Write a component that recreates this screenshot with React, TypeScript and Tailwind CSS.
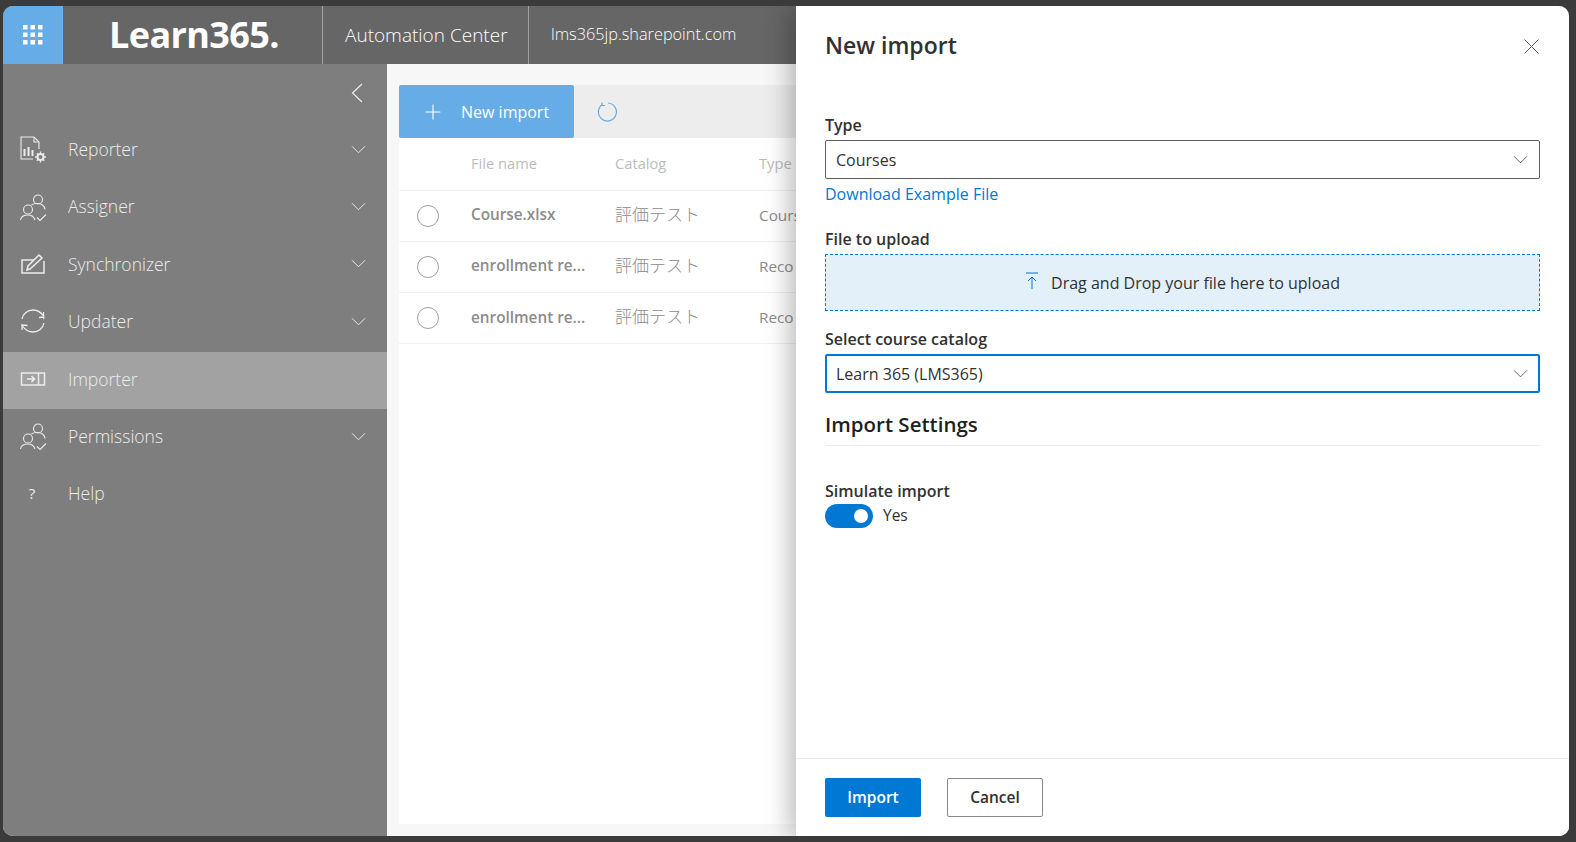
import { ReactNode } from "react";
import { Plus } from "lucide-react";

const font = "font-['Open_Sans','Noto_Sans_CJK_JP',sans-serif]";

const Chevron = ({ className }: { className: string }) => (
  <svg viewBox="0 0 16 9" fill="none" stroke="currentColor" strokeWidth="1" className={className}>
    <path d="M1 1l7 7 7-7" />
  </svg>
);

const PeopleIcon = () => (
  <svg viewBox="0 0 28 28" fill="none" stroke="currentColor" strokeWidth="1.1" className="h-7 w-7">
    <circle cx="19" cy="6.500" r="4.500" />
    <circle cx="9" cy="16.500" r="4.500" />
    <path d="M1.500 27c.5-3 3.500-5 7.500-5s6 2 7 5" />
    <path d="M12.500 12c1-1 3.500-1.500 6.500-1.500s6.500 2 7 6" />
    <path d="M18 24.500l3 3 6-6" />
  </svg>
);

const navItems: { label: string; icon: ReactNode; chevron?: boolean; active?: boolean }[] = [
  {
    label: "Reporter",
    chevron: true,
    icon: (
      <svg viewBox="0 0 28 28" fill="none" stroke="currentColor" strokeWidth="1.1" className="h-7 w-7">
        <path d="M14 24H2V2h13l5 5v7" />
        <path d="M15 2v5h5" />
        <path d="M5.500 21v-7M9.500 21v-9M13.500 21v-6" strokeWidth="2" />
        <circle cx="21.500" cy="22" r="3" strokeWidth="2" />
        <path d="M21.500 16.500v2M21.500 25.500v2M16 22h2M25 22h2M17.800 18.300l1.400 1.400M23.800 24.300l1.400 1.400M17.800 25.700l1.400-1.400M23.800 19.700l1.400-1.400" strokeWidth="1.300" />
      </svg>
    ),
  },
  { label: "Assigner", chevron: true, icon: <PeopleIcon /> },
  {
    label: "Synchronizer",
    chevron: true,
    icon: (
      <svg viewBox="0 0 28 28" fill="none" stroke="currentColor" strokeWidth="1.500" className="h-7 w-7">
        <path d="M15 10H3v13h22V11" />
        <path d="M8 20l1-4L20 5l3 3-12 11z" />
      </svg>
    ),
  },
  {
    label: "Updater",
    chevron: true,
    icon: (
      <svg viewBox="0 0 28 28" fill="none" stroke="currentColor" strokeWidth="1.300" className="h-7 w-7">
        <path d="M3 12C4 6.500 8.500 3 14 3c4.500 0 8 2.300 10.500 6" />
        <path d="M25 12c-.5-1-.5-3-.5-7M25 10l-5 .5" />
        <path d="M25 16c-1 5.500-5.500 9-11 9-4.500 0-8-2.300-10.500-6" />
        <path d="M3 17v6M3 18l5.500 .5" />
      </svg>
    ),
  },
  {
    label: "Importer",
    active: true,
    icon: (
      <svg viewBox="0 0 28 28" fill="none" stroke="currentColor" strokeWidth="1.500" className="h-7 w-7">
        <path d="M2.500 8h23v12h-23zM19.500 8v12" />
        <path d="M8 14h7M12.500 11l3 3-3 3" strokeWidth="1.700" />
      </svg>
    ),
  },
  { label: "Permissions", chevron: true, icon: <PeopleIcon /> },
  {
    label: "Help",
    icon: <span className="text-[15px] w-[26px] text-center">?</span>,
  },
];

const rows = [
  { name: "Course.xlsx", type: "Cours" },
  { name: "enrollment re...", type: "Reco" },
  { name: "enrollment re...", type: "Reco" },
];

const Sidebar = () => (
  <aside className="w-[384px] shrink-0 bg-[#7e7e7e] text-[#ececec]">
    <div className="h-[58px] flex items-center justify-end pr-[24px] pb-[1px]">
      <svg viewBox="0 0 12 20" fill="none" stroke="currentColor" strokeWidth="1.200" className="h-[20px] w-[12px]">
        <path d="M11 1L1.500 10l9.500 9" />
      </svg>
    </div>
    {navItems.map((item) => (
      <div
        key={item.label}
        className={`h-[57.4px] flex items-center pl-[16px] pr-[21px] pb-[3px] ${item.active ? "bg-[#a2a2a2]" : ""}`}
      >
        <span className="w-[49px] shrink-0 flex items-center">{item.icon}</span>
        <span className="flex-1 text-[17.500px] font-light">{item.label}</span>
        {item.chevron && <Chevron className="w-[15px] h-[9px]" />}
      </div>
    ))}
  </aside>
);

const ImportList = () => (
  <main className="flex-1 min-w-0 bg-[#f7f7f7] pl-[12px] pt-[21px] pb-[12px]">
    <div className="h-full bg-white">
      <div className="h-[53px] flex items-center bg-[#ededed]">
        <div className="w-[175px] h-full flex items-center bg-[#66ade8] rounded-[2px] text-white pl-[22px] text-[16px]">
          <Plus className="w-[24px] h-[24px] mr-[16px]" strokeWidth={1.1} />
          New import
        </div>
        <svg viewBox="0 0 22 22" fill="none" stroke="#66ade8" strokeWidth="1.200" className="w-[22px] h-[22px] ml-[23px]">
          <path d="M5 3.800A9 9 0 1 0 11 2" />
          <path d="M5 1.500v3h3" />
        </svg>
      </div>
      <div className="h-[52.500px] flex items-center border-b border-[#f0f0f0] text-[14.700px] text-[#bcbcbc] pb-[2px]">
        <span className="w-[72px]" />
        <span className="w-[144px]">File name</span>
        <span className="w-[144px]">Catalog</span>
        <span>Type</span>
      </div>
      {rows.map((row, i) => (
        <div key={i} className="h-[51.300px] flex items-center border-b border-[#f0f0f0] text-[15.300px] text-[#8c8c8c] whitespace-nowrap">
          <span className="w-[72px] pl-[18px]">
            <span className="block w-[22px] h-[22px] rounded-full border border-[#a0a0a0]" />
          </span>
          <span className="w-[144px] font-semibold -mt-[2px]">{row.name}</span>
          <span className="w-[144px] text-[17px] font-light -mt-[2px]">評価テスト</span>
          <span className="-mt-[1px]">{row.type}</span>
        </div>
      ))}
    </div>
  </main>
);

const ImportPanel = () => (
  <section className="absolute top-0 bottom-0 right-0 w-[773px] bg-white flex flex-col shadow-[-6px_0_24px_rgba(0,0,0,0.28)] text-[#323130]">
    <div className="flex-1 pl-[29px] pr-[29px]">
      <div className="h-[83px] flex items-center justify-between -mt-[2px]">
        <h2 className="text-[23px] font-semibold">New import</h2>
        <svg viewBox="0 0 15 15" fill="none" stroke="#605e5c" strokeWidth="1" className="w-[15px] h-[15px] mr-[1px] mt-[1px]">
          <path d="M.5 .5l14 14M14.500 .5l-14 14" />
        </svg>
      </div>
      <label className="block text-[16px] font-semibold leading-[20px] mt-[28px]">Type</label>
      <div className="mt-[5px] h-[39px] border border-[#605e5c] rounded-[2px] flex items-center justify-between pl-[10px] pr-[11px] text-[16px]">
        Courses
        <Chevron className="w-[15px] h-[9px] text-[#605e5c]" />
      </div>
      <a className="block text-[16px] text-[#0078d4] leading-[20px] mt-[5px]">Download Example File</a>
      <label className="block text-[16px] font-semibold leading-[20px] mt-[25px]">File to upload</label>
      <div className="mt-[5px] h-[57px] border border-dashed border-[#0078d4] bg-[#e3f0fa] flex items-center justify-center text-[16px]">
        <svg viewBox="0 0 14 18" fill="none" stroke="#0078d4" strokeWidth="1" className="w-[14px] h-[18px] mr-[12px] -mt-[4px]">
          <path d="M1 1h12M7 17V5M3 9l4-4 4 4" />
        </svg>
        Drag and Drop your file here to upload
      </div>
      <label className="block text-[16px] font-semibold leading-[20px] mt-[18px]">Select course catalog</label>
      <div className="mt-[5px] h-[39px] border-2 border-[#0078d4] rounded-[2px] flex items-center justify-between pl-[9px] pr-[10px] text-[16px]">
        Learn 365 (LMS365)
        <Chevron className="w-[15px] h-[9px] text-[#605e5c]" />
      </div>
      <h3 className="text-[20.500px] font-semibold text-[#201f1e] leading-[26px] mt-[18px] pb-[8px] border-b border-[#edebe9]">Import Settings</h3>
      <label className="block text-[16px] font-semibold leading-[20px] mt-[35px]">Simulate import</label>
      <div className="flex items-center gap-[10px] mt-[3px]">
        <span className="w-[48px] h-[24px] rounded-full bg-[#0078d4] flex items-center justify-end pr-[5px]">
          <span className="w-[14px] h-[14px] rounded-full bg-white" />
        </span>
        <span className="text-[15.500px]">Yes</span>
      </div>
    </div>
    <div className="h-[78px] border-t border-[#edebe9] flex items-start pt-[19px] pl-[29px] gap-[26px] text-[15.500px] font-semibold">
      <button className="w-[96px] h-[39px] rounded-[2px] bg-[#0078d4] text-white">Import</button>
      <button className="w-[96px] h-[39px] rounded-[2px] border border-[#8a8886] text-[#323130]">Cancel</button>
    </div>
  </section>
);

export default function App() {
  return (
    <div className={`w-[1576px] h-[842px] bg-[#3b3b3b] pt-[6px] pl-[3px] pr-[7px] pb-[6px] ${font}`}>
      <div className="relative h-full rounded-[10px] overflow-hidden flex flex-col bg-white">
        <header className="h-[58px] shrink-0 flex items-center bg-[#666666] text-white">
          <div className="w-[60px] h-full bg-[#66ade8] flex items-center justify-center">
            <svg viewBox="0 0 20 20" fill="white" className="w-[20px] h-[20px]">
              {[0, 7.500, 15].flatMap((y) =>
                [0, 7.500, 15].map((x) => <rect key={`${x}-${y}`} x={x} y={y} width="4.500" height="4.500" />)
              )}
            </svg>
          </div>
          <div className="w-[260px] h-full flex items-center pl-[46px] text-[36px] font-bold border-r border-[#a0a0a0] tracking-[-0.6px] whitespace-nowrap">
            Learn365.
          </div>
          <div className="w-[206px] h-full flex items-center pl-[22px] text-[19px] border-r border-[#a0a0a0] font-light whitespace-nowrap">
            Automation Center
          </div>
          <div className="pl-[22px] text-[16.300px] font-light -mt-[1px]">lms365jp.sharepoint.com</div>
        </header>
        <div className="flex-1 min-h-0 flex">
          <Sidebar />
          <ImportList />
        </div>
        <ImportPanel />
      </div>
    </div>
  );
}
